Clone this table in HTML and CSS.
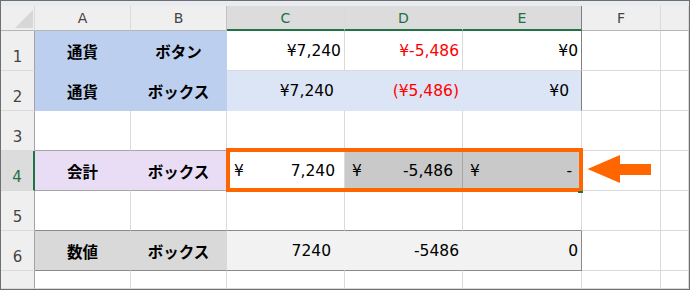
FILE: index.html
```html
<!DOCTYPE html>
<html lang="ja">
<head>
  <meta charset="UTF-8">
  <title>通貨と会計の表示形式</title>
  <link rel="stylesheet" href="styles.css">
</head>
<body>

  <div class="sheet">
    <div class="ribbon-edge"></div>

    <div class="grid">
      <!-- column headers -->
      <div class="corner"><span class="select-all"></span></div>
      <div class="col-head">A</div>
      <div class="col-head edge-b">B</div>
      <div class="col-head sel">C</div>
      <div class="col-head sel">D</div>
      <div class="col-head sel edge-r">E</div>
      <div class="col-head">F</div>
      <div class="col-head"></div>

      <!-- row 1 -->
      <div class="row-head">1</div>
      <div class="cell label blue">通貨</div>
      <div class="cell label blue">ボタン</div>
      <div class="cell num">¥7,240</div>
      <div class="cell num neg">¥-5,486</div>
      <div class="cell num edge-r">¥0</div>
      <div class="cell"></div>
      <div class="cell"></div>

      <!-- row 2 -->
      <div class="row-head">2</div>
      <div class="cell label blue">通貨</div>
      <div class="cell label blue">ボックス</div>
      <div class="cell num light paren">¥7,240</div>
      <div class="cell num light neg">(¥5,486)</div>
      <div class="cell num light paren-wide edge-r">¥0</div>
      <div class="cell"></div>
      <div class="cell"></div>

      <!-- row 3 -->
      <div class="row-head">3</div>
      <div class="cell line-b"></div>
      <div class="cell line-b"></div>
      <div class="cell"></div>
      <div class="cell"></div>
      <div class="cell"></div>
      <div class="cell"></div>
      <div class="cell"></div>

      <!-- row 4 -->
      <div class="row-head sel">4</div>
      <div class="cell label purple line-b">会計</div>
      <div class="cell label purple line-b">ボックス</div>
      <div class="cell acct"><span>¥</span><span>7,240</span></div>
      <div class="cell acct grey"><span>¥</span><span>-5,486</span></div>
      <div class="cell acct grey"><span>¥</span><span>-</span></div>
      <div class="cell"></div>
      <div class="cell"></div>

      <!-- row 5 -->
      <div class="row-head">5</div>
      <div class="cell dark-b"></div>
      <div class="cell dark-b"></div>
      <div class="cell dark-b"></div>
      <div class="cell dark-b"></div>
      <div class="cell dark-b"></div>
      <div class="cell"></div>
      <div class="cell"></div>

      <!-- row 6 -->
      <div class="row-head">6</div>
      <div class="cell label silver dark-b">数値</div>
      <div class="cell label silver dark-b">ボックス</div>
      <div class="cell num pale dark-b indent">7240</div>
      <div class="cell num pale dark-b">-5486</div>
      <div class="cell num pale dark-b dark-r">0</div>
      <div class="cell"></div>
      <div class="cell"></div>

      <!-- row 7 -->
      <div class="row-head"></div>
      <div class="cell"></div>
      <div class="cell"></div>
      <div class="cell"></div>
      <div class="cell"></div>
      <div class="cell"></div>
      <div class="cell"></div>
      <div class="cell"></div>
    </div>

    <!-- highlight around C4:E4 -->
    <div class="callout"></div>
    <div class="fill-handle"></div>
    <svg class="arrow" width="65" height="29" viewBox="0 0 65 29">
      <polygon points="0.5,14 33,0 33,9 64,9 64,20 33,20 33,28" fill="#ff6600"/>
    </svg>
  </div>

</body>
</html>
```

FILE: styles.css
```css
/* Reset and basic styles */
* {
  margin: 0;
  padding: 0;
  box-sizing: border-box;
}

body {
  background: #fff;
  font-family: "DejaVu Sans", "Noto Sans CJK JP", sans-serif;
}

.sheet {
  position: relative;
  width: 690px;
  height: 290px;
  border: 1px solid #6f6f6f;
  background: #fff;
  overflow: hidden;
}

.ribbon-edge {
  height: 5px;
  background: #e8ecf2;
}

/* Spreadsheet grid */
.grid {
  display: grid;
  grid-template-columns: 34px 96px 96px 118px 118px 119px 79px 1fr;
  grid-template-rows: 25px repeat(6, 40px) 18px;
}

.grid > * {
  display: flex;
  align-items: center;
  border-right: 1px solid #dadada;
  border-bottom: 1px solid #dadada;
}

/* Headers */
.corner,
.col-head,
.row-head {
  background: #efefef;
  color: #454545;
}

.corner {
  justify-content: flex-end;
  align-items: flex-end;
  padding: 0 1px 2px 0;
  border-bottom-color: #b5b5b5;
}

.select-all {
  width: 0;
  height: 0;
  border-left: 18px solid transparent;
  border-bottom: 18px solid #d7d7d7;
}

.col-head {
  justify-content: center;
  font-size: 14px;
  border-bottom-color: #b5b5b5;
}

.col-head.edge-b {
  border-right-color: #c2c2c2;
}

.col-head.sel {
  background: #dcdcdc;
  color: #1e7145;
  border-bottom: 2px solid #217346;
}

.row-head {
  justify-content: center;
  align-items: flex-end;
  padding-bottom: 4px;
  font-size: 15px;
  border-right-color: #a3a3a3;
}

.row-head.sel {
  background: #dcdcdc;
  color: #1e7145;
  border-right: 2px solid #217346;
}

/* Cells */
.cell {
  font-size: 15.5px;
  color: #000;
}

.label {
  justify-content: center;
  font-weight: bold;
}

.num {
  justify-content: flex-end;
  padding-right: 3px;
}

.neg {
  color: #ff0000;
}

.paren {
  padding-right: 10px;
}

.paren-wide {
  padding-right: 12px;
}

.indent {
  padding-right: 13px;
}

.acct {
  justify-content: space-between;
  padding: 0 9px 0 7px;
}

/* Fills: gridlines vanish under a filled cell */
.blue {
  background: #bdcfef;
  border-color: #bdcfef !important;
}

.light {
  background: #dce5f6;
  border-bottom-color: #dce5f6 !important;
}

.light:not(.edge-r) {
  border-right-color: #dce5f6;
}

.purple {
  background: #e9ddf6;
  border-right-color: #e9ddf6 !important;
}

.grey {
  background: #c9c9c9;
  border-right-color: #a6a6a6 !important;
}

.silver {
  background: #d9d9d9;
  border-right-color: #d9d9d9 !important;
}

.pale {
  background: #f2f2f2;
}

.pale:not(.dark-r) {
  border-right-color: #f2f2f2 !important;
}

/* Cell borders */
.grid > .edge-r {
  border-right-color: #7f7f7f;
}

.grid > .line-b {
  border-bottom-color: #a6a6a6;
}

.grid > .dark-b {
  border-bottom-color: #8a8a8a;
}

.grid > .dark-r {
  border-right-color: #8a8a8a;
}

/* Annotation */
.callout {
  position: absolute;
  left: 225px;
  top: 147px;
  width: 357px;
  height: 44px;
  border: 4px solid #ff6600;
}

.fill-handle {
  position: absolute;
  left: 577px;
  top: 190px;
  width: 5px;
  height: 2px;
  background: #217346;
}

.arrow {
  position: absolute;
  left: 586px;
  top: 154px;
}
```
